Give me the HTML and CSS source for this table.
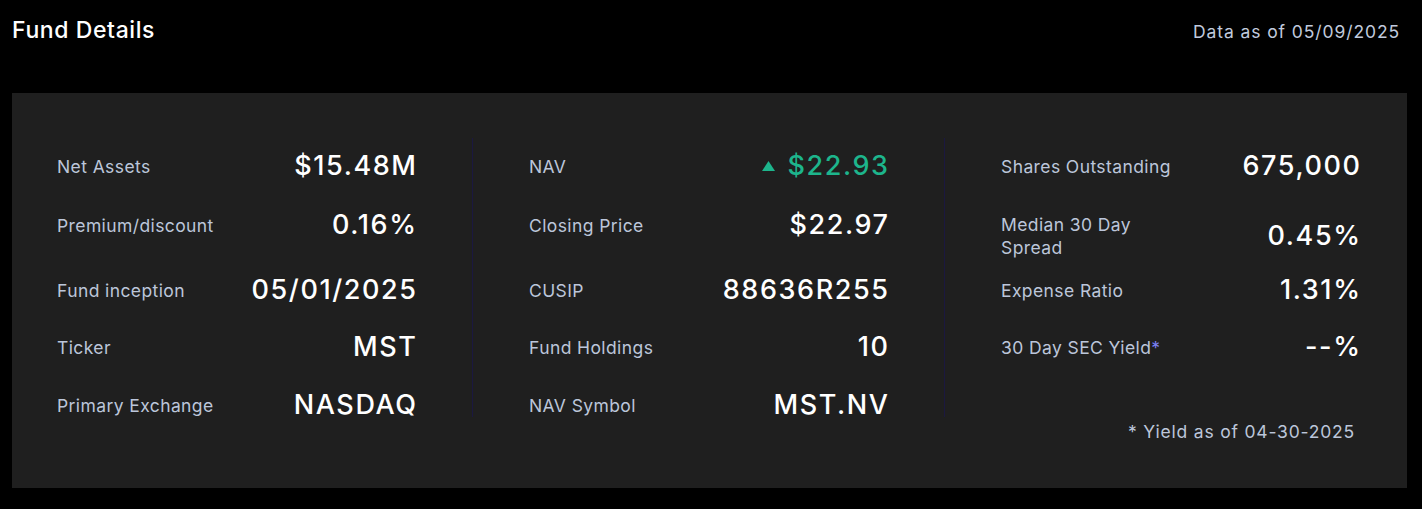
FILE: index.html
```html
<!DOCTYPE html>
<html lang="en">
<head>
<meta charset="utf-8">
<title>Fund Details</title>
<link rel="stylesheet" href="styles.css">
</head>
<body>
<main class="page">
  <header class="header">
    <h2 class="title">Fund Details</h2>
    <span class="as-of">Data as of 05/09/2025</span>
  </header>
  <section class="card">
    <div class="columns">
      <div class="col">
        <div class="cell"><span class="label">Net Assets</span><span class="value">$15.48M</span></div>
        <div class="cell"><span class="label">Premium/discount</span><span class="value">0.16%</span></div>
        <div class="cell"><span class="label">Fund inception</span><span class="value">05/01/2025</span></div>
        <div class="cell"><span class="label">Ticker</span><span class="value">MST</span></div>
        <div class="cell"><span class="label">Primary Exchange</span><span class="value">NASDAQ</span></div>
      </div>
      <div class="col col-sep">
        <div class="cell"><span class="label">NAV</span><span class="value value-up"><svg class="arrow" width="13" height="10" viewBox="0 0 13 10"><polygon points="6.5,0 13,10 0,10" fill="currentColor"/></svg>$22.93</span></div>
        <div class="cell"><span class="label">Closing Price</span><span class="value">$22.97</span></div>
        <div class="cell"><span class="label">CUSIP</span><span class="value">88636R255</span></div>
        <div class="cell"><span class="label">Fund Holdings</span><span class="value">10</span></div>
        <div class="cell"><span class="label">NAV Symbol</span><span class="value">MST.NV</span></div>
      </div>
      <div class="col col-sep">
        <div class="cell"><span class="label">Shares Outstanding</span><span class="value">675,000</span></div>
        <div class="cell"><span class="label label-narrow">Median 30 Day Spread</span><span class="value">0.45%</span></div>
        <div class="cell"><span class="label">Expense Ratio</span><span class="value">1.31%</span></div>
        <div class="cell"><span class="label">30 Day SEC Yield<span class="star">*</span></span><span class="value">--%</span></div>
      </div>
    </div>
    <p class="footnote">* Yield as of 04-30-2025</p>
  </section>
</main>
</body>
</html>
```

FILE: styles.css
```css
* { box-sizing: border-box; }

body {
  margin: 0;
  background: #000;
  font-family: Inter, "Liberation Sans", sans-serif;
  color: #fff;
}

.page {
  padding: 0 15px 0 12px;
}

.header {
  display: flex;
  justify-content: space-between;
  align-items: center;
  height: 93px;
  padding: 0 7px 32px 0;
}

.title {
  margin: 0 0 2px;
  font-size: 23px;
  font-weight: 500;
  letter-spacing: 0.6px;
  color: #fff;
}

.as-of {
  font-size: 17.5px;
  letter-spacing: 0.9px;
  color: #c0cadd;
  padding-top: 2px;
}

.card {
  background: #1f1f1f;
  padding: 45px 52px 45px 45px;
}

.columns {
  display: flex;
  margin-right: -5px;
}

.col {
  flex: 1;
  display: grid;
  grid-template-rows: 59px 65px 57px 58px auto;
  align-items: start;
  padding: 16px 56px 0 0;
}

.col-sep {
  border-left: 1px solid #1b1840;
  padding-left: 56px;
}

.col:last-child {
  padding-right: 0;
}

.cell {
  display: flex;
  justify-content: space-between;
  align-items: center;
}

.label {
  font-size: 17.5px;
  line-height: 23px;
  letter-spacing: 0.4px;
  color: #bcc6da;
}

.label-narrow {
  max-width: 150px;
}

.star {
  color: #7b80f2;
}

.value {
  display: flex;
  align-items: center;
  gap: 12px;
  margin-right: -1.6px;
  font-size: 27px;
  line-height: 24px;
  font-weight: 500;
  letter-spacing: 1.6px;
  color: #fff;
  white-space: nowrap;
}

.value-up {
  color: #1db58c;
}

.arrow {
  display: block;
}

.footnote {
  margin: 3px 0 0;
  text-align: right;
  font-size: 17.5px;
  line-height: 23px;
  letter-spacing: 0.8px;
  color: #bcc6da;
}
```
